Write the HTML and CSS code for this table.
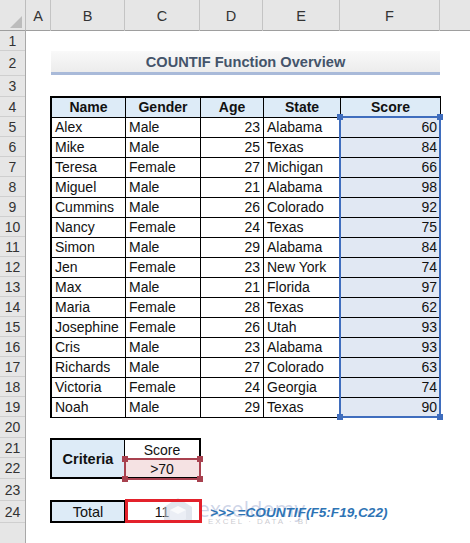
FILE: index.html
```html
<!DOCTYPE html>
<html>
<head>
<meta charset="utf-8">
<link rel="stylesheet" href="styles.css">
</head>
<body>
<div class="sheet">
  <div class="corner">
    <svg width="26" height="31" viewBox="0 0 26 31"><polygon points="22,16 22,28 10,28" fill="#bcbcbc"/></svg>
  </div>
  <div class="colheads">
    <div class="ch">A</div><div class="ch">B</div><div class="ch">C</div><div class="ch">D</div><div class="ch">E</div><div class="ch">F</div><div class="ch"></div>
  </div>
  <div class="rowheads">
    <div class="rh">1</div><div class="rh">2</div><div class="rh">3</div><div class="rh">4</div>
    <div class="rh">5</div><div class="rh">6</div><div class="rh">7</div><div class="rh">8</div>
    <div class="rh">9</div><div class="rh">10</div><div class="rh">11</div><div class="rh">12</div>
    <div class="rh">13</div><div class="rh">14</div><div class="rh">15</div><div class="rh">16</div>
    <div class="rh">17</div><div class="rh">18</div><div class="rh">19</div><div class="rh">20</div>
    <div class="rh">21</div><div class="rh">22</div><div class="rh">23</div><div class="rh">24</div>
    <div class="rh last"></div>
  </div>
  <div class="body">
    <div class="title">COUNTIF Function Overview</div>

    <div class="data">
      <div class="c hd">Name</div><div class="c hd">Gender</div><div class="c hd">Age</div><div class="c hd">State</div><div class="c hd">Score</div>
      <div class="c">Alex</div><div class="c">Male</div><div class="c num">23</div><div class="c">Alabama</div><div class="c num sc">60</div>
      <div class="c">Mike</div><div class="c">Male</div><div class="c num">25</div><div class="c">Texas</div><div class="c num sc">84</div>
      <div class="c">Teresa</div><div class="c">Female</div><div class="c num">27</div><div class="c">Michigan</div><div class="c num sc">66</div>
      <div class="c">Miguel</div><div class="c">Male</div><div class="c num">21</div><div class="c">Alabama</div><div class="c num sc">98</div>
      <div class="c">Cummins</div><div class="c">Male</div><div class="c num">26</div><div class="c">Colorado</div><div class="c num sc">92</div>
      <div class="c">Nancy</div><div class="c">Female</div><div class="c num">24</div><div class="c">Texas</div><div class="c num sc">75</div>
      <div class="c">Simon</div><div class="c">Male</div><div class="c num">29</div><div class="c">Alabama</div><div class="c num sc">84</div>
      <div class="c">Jen</div><div class="c">Female</div><div class="c num">23</div><div class="c">New York</div><div class="c num sc">74</div>
      <div class="c">Max</div><div class="c">Male</div><div class="c num">21</div><div class="c">Florida</div><div class="c num sc">97</div>
      <div class="c">Maria</div><div class="c">Female</div><div class="c num">28</div><div class="c">Texas</div><div class="c num sc">62</div>
      <div class="c">Josephine</div><div class="c">Female</div><div class="c num">26</div><div class="c">Utah</div><div class="c num sc">93</div>
      <div class="c">Cris</div><div class="c">Male</div><div class="c num">23</div><div class="c">Alabama</div><div class="c num sc">93</div>
      <div class="c">Richards</div><div class="c">Male</div><div class="c num">27</div><div class="c">Colorado</div><div class="c num sc">63</div>
      <div class="c">Victoria</div><div class="c">Female</div><div class="c num">24</div><div class="c">Georgia</div><div class="c num sc">74</div>
      <div class="c">Noah</div><div class="c">Male</div><div class="c num">29</div><div class="c">Texas</div><div class="c num sc">90</div>
    </div>

    <div class="sel sel-score"><i class="hdl tl"></i><i class="hdl tr"></i><i class="hdl bl"></i><i class="hdl br"></i></div>

    <div class="crit">
      <div class="k">Criteria</div>
      <div class="v">Score</div>
      <div class="v pink">&gt;70</div>
    </div>
    <div class="sel sel-crit"><i class="hdl tl"></i><i class="hdl tr"></i><i class="hdl bl"></i><i class="hdl br"></i></div>

    <div class="total">
      <div class="k plain">Total</div>
      <div class="v">11</div>
    </div>
    <div class="redbox"></div>

    <div class="watermark">
      <svg class="wm-logo" width="30" height="27" viewBox="0 0 30 27">
        <polygon points="15,1 29,10 29,26 1,26 1,10" fill="#c9cfdf" opacity="0.55"/>
        <polygon points="15,9 23,13 23,22 15,26 7,22 7,13" fill="#eef0f6" opacity="0.8"/>
        <polygon points="15,9 23,13 15,17 7,13" fill="#ffffff" opacity="0.7"/>
      </svg>
      <div class="wm-text">exceldemy</div>
      <div class="wm-sub">EXCEL · DATA · BI</div>
    </div>

    <div class="formula">&gt;&gt;&gt; =COUNTIF(F5:F19,C22)</div>
  </div>
</div>
</body>
</html>
```
FILE: styles.css
```css
html, body {
  margin: 0;
  padding: 0;
  background: #ffffff;
}
.sheet {
  width: 470px;
  height: 543px;
  overflow: hidden;
  display: grid;
  grid-template-columns: 26px 1fr;
  grid-template-rows: 31px 1fr;
  font-family: "Liberation Sans", Arial, sans-serif;
  font-size: 14px;
  color: #111;
}
.corner {
  background: #e6e6e6;
  border-right: 1px solid #bdbdbd;
  border-bottom: 1px solid #9e9e9e;
  box-sizing: border-box;
}
.corner svg { display: block; }
.colheads {
  display: grid;
  grid-template-columns: 25px 74px 75px 63px 77px 100px 1fr;
  background: #e6e6e6;
  border-bottom: 1px solid #9e9e9e;
  box-sizing: border-box;
}
.ch {
  border-right: 1px solid #c4c4c4;
  text-align: center;
  line-height: 30px;
  padding-top: 1px;
  color: #333;
  font-size: 14.5px;
}
.ch:last-child { border-right: none; }
.rowheads, .body {
  display: grid;
  grid-template-rows: 20px 25px 21px repeat(16, 20px) 21px 20px 21px 22px 22px 1fr;
}
.rowheads {
  background: #e6e6e6;
  border-right: 1px solid #a8a8a8;
  box-sizing: border-box;
}
.rh {
  border-bottom: 1px solid #cfcfcf;
  box-sizing: border-box;
  display: flex;
  align-items: center;
  justify-content: center;
  color: #333;
  font-size: 14px;
}
.rh.last { border-bottom: none; }
.body {
  position: relative;
  grid-template-columns: 25px 74px 75px 63px 77px 100px 1fr;
  overflow: hidden;
}
.title {
  grid-column: 2 / 7;
  grid-row: 2;
  background: linear-gradient(#f9f9f9, #ececec);
  border-bottom: 3px solid #a9bad9;
  box-sizing: border-box;
  margin-bottom: 1px;
  display: flex;
  align-items: center;
  justify-content: center;
  font-weight: bold;
  font-size: 14.6px;
  color: #44546a;
  padding-top: 1px;
}
.data {
  grid-column: 2 / 7;
  grid-row: 4 / 20;
  display: grid;
  grid-template-columns: 74px 75px 63px 77px 100px;
  grid-auto-rows: 20px;
  border-left: 1px solid #000;
  border-top: 1px solid #000;
  outline: 1px solid #000;
  box-sizing: border-box;
}
.c {
  border-right: 1px solid #000;
  border-bottom: 1px solid #000;
  box-sizing: border-box;
  padding: 0 3px;
  line-height: 19px;
  white-space: nowrap;
  overflow: hidden;
}
.c.hd {
  background: #ddebf7;
  font-weight: bold;
  text-align: center;
}
.c.num { text-align: right; padding-right: 3px; }
.c.sc { background: #e1e8f3; }
.sel {
  position: relative;
  box-sizing: border-box;
  margin: -1px;
  pointer-events: none;
  z-index: 2;
}
.sel-score {
  grid-column: 6;
  grid-row: 5 / 20;
  border: 2px solid #3f6dbd;
}
.sel-crit {
  grid-column: 3;
  grid-row: 22;
  border: 2px solid #a8414f;
  margin: 0 -1px -1px -1px;
}
.hdl {
  position: absolute;
  width: 6px;
  height: 6px;
  background: #3f6dbd;
}
.sel-crit .hdl { background: #a8414f; }
.hdl.tl { left: -4px; top: -4px; }
.hdl.tr { right: -4px; top: -4px; }
.hdl.bl { left: -4px; bottom: -4px; }
.hdl.br { right: -4px; bottom: -4px; }
.crit {
  grid-column: 2 / 4;
  grid-row: 21 / 23;
  display: grid;
  grid-template-columns: 73px 1fr;
  grid-template-rows: 20px 1fr;
  border: 2px solid #000;
  box-sizing: border-box;
  margin: 0 -1px 0 -1px;
}
.crit .k {
  grid-row: 1 / 3;
  background: #ddebf7;
  border-right: 1px solid #000;
  font-weight: bold;
  display: flex;
  align-items: center;
  justify-content: center;
  font-size: 14.5px;
}
.v {
  display: flex;
  align-items: center;
  justify-content: center;
}
.v.pink { background: #f5e2e3; }
.total {
  grid-column: 2 / 4;
  grid-row: 24;
  display: grid;
  grid-template-columns: 73px 1fr;
  border: 2px solid #000;
  box-sizing: border-box;
  margin: -1px -1px 0 -1px;
}
.total .k {
  background: #ddebf7;
  border-right: 1px solid #000;
  display: flex;
  align-items: center;
  justify-content: center;
  font-size: 14.5px;
}
.redbox {
  grid-column: 3;
  grid-row: 24;
  border: 3px solid #e3212b;
  box-sizing: border-box;
  margin: -2px -2px 0 0;
  z-index: 2;
  pointer-events: none;
}
.formula {
  grid-column: 4 / 8;
  grid-row: 24;
  padding-left: 10px;
  display: flex;
  align-items: center;
  font-weight: bold;
  font-style: italic;
  font-size: 13.6px;
  color: #2e74b5;
  white-space: nowrap;
  z-index: 3;
}
.watermark {
  position: absolute;
  left: 137px;
  top: 465px;
  width: 160px;
  height: 30px;
  z-index: 1;
  pointer-events: none;
}
.wm-logo {
  position: absolute;
  left: 0;
  top: 1px;
}
.wm-text {
  position: absolute;
  left: 35px;
  top: -1px;
  font-size: 21px;
  color: rgba(165, 178, 212, 0.55);
  font-family: "Open Sans", sans-serif;
  letter-spacing: 0.3px;
}
.wm-sub {
  position: absolute;
  left: 45px;
  top: 21px;
  font-size: 8px;
  letter-spacing: 2px;
  color: rgba(150, 150, 160, 0.5);
  white-space: nowrap;
}
```
